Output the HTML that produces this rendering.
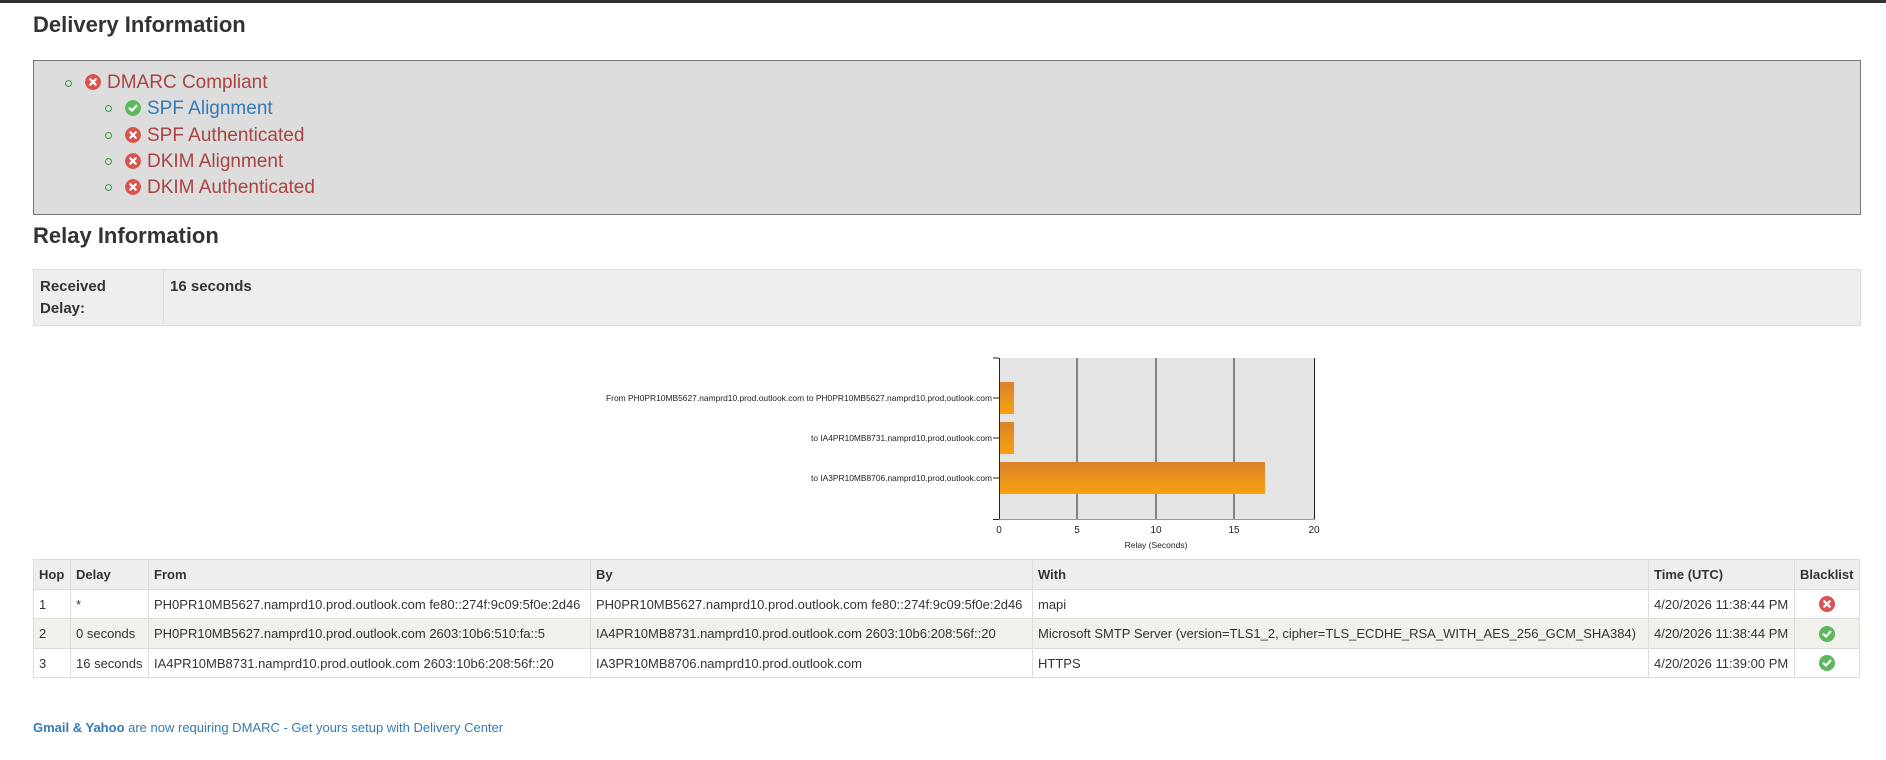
<!DOCTYPE html>
<html><head><meta charset="utf-8"><style>
*{margin:0;padding:0;box-sizing:border-box}
body{width:1886px;height:760px;background:#fff;font-family:"Liberation Sans",Arial,sans-serif;color:#333;position:relative;overflow:hidden}
.a{position:absolute}
h2{position:absolute;font-size:22px;font-weight:bold;color:#333;white-space:nowrap}
.ic{position:absolute;width:16px;height:16px;border-radius:50%}
.ic svg{display:block}
.bul{position:absolute;width:7px;height:7px;border:1.3px solid #3c9a3c;border-radius:50%}
.li{position:absolute;font-size:19px;white-space:nowrap;line-height:22px}
.red{color:#a94442}.blue{color:#337ab7}
table{position:absolute;border-collapse:collapse;font-size:13px}
td{border:1px solid #ddd;padding:0 5px;white-space:nowrap;vertical-align:middle}
</style></head><body>
<div class="a" style="left:0;top:0;width:1886px;height:3px;background:#333"></div>
<h2 style="left:33px;top:12px">Delivery Information</h2>
<div class="a" style="left:33px;top:60px;width:1828px;height:155px;background:#ddd;border:1px solid #777"></div>

<svg width="0" height="0" style="position:absolute"><defs>
<g id="x"><circle cx="8" cy="8" r="8" fill="#d9534f"/><path d="M5.3 5.3L10.7 10.7M10.7 5.3L5.3 10.7" stroke="#fff" stroke-width="2.2" stroke-linecap="round"/></g>
<g id="c"><circle cx="8" cy="8" r="8" fill="#5cb85c"/><path d="M4.6 8.3L7 10.6L11.4 5.8" stroke="#fff" stroke-width="2.2" fill="none" stroke-linecap="round" stroke-linejoin="round"/></g>
</defs></svg>

<div class="bul" style="left:65px;top:80px"></div>
<svg class="ic" style="left:85px;top:74px" width="16" height="16"><use href="#x"/></svg>
<div class="li red" style="left:107px;top:72px">DMARC Compliant</div>

<div class="bul" style="left:105px;top:105px"></div>
<svg class="ic" style="left:125px;top:100px" width="16" height="16"><use href="#c"/></svg>
<div class="li blue" style="left:147px;top:98px">SPF Alignment</div>

<div class="bul" style="left:105px;top:132px"></div>
<svg class="ic" style="left:125px;top:127px" width="16" height="16"><use href="#x"/></svg>
<div class="li red" style="left:147px;top:125px">SPF Authenticated</div>

<div class="bul" style="left:105px;top:158px"></div>
<svg class="ic" style="left:125px;top:153px" width="16" height="16"><use href="#x"/></svg>
<div class="li red" style="left:147px;top:151px">DKIM Alignment</div>

<div class="bul" style="left:105px;top:184px"></div>
<svg class="ic" style="left:125px;top:179px" width="16" height="16"><use href="#x"/></svg>
<div class="li red" style="left:147px;top:177px">DKIM Authenticated</div>

<h2 style="left:33px;top:223px">Relay Information</h2>
<div class="a" style="left:33px;top:269px;width:1828px;height:57px;background:#eee;border:1px solid #ddd"></div>
<div class="a" style="left:163px;top:269px;width:1px;height:57px;background:#ddd"></div>
<div class="a" style="left:40px;top:276px;font-size:15px;font-weight:bold;line-height:22px">Received<br>Delay:</div>
<div class="a" style="left:170px;top:276px;font-size:15px;font-weight:bold;line-height:22px">16 seconds</div>

<svg class="a" style="left:580px;top:350px" width="760" height="210">
<defs><linearGradient id="g" x1="0" y1="0" x2="0" y2="1"><stop offset="0" stop-color="#d9822b"/><stop offset="1" stop-color="#f7a10c"/></linearGradient></defs>
<rect x="419" y="8" width="316" height="161" fill="#e4e4e4"/>
<g stroke="#222" stroke-width="1">
<line x1="497" y1="8" x2="497" y2="169"/><line x1="576" y1="8" x2="576" y2="169"/><line x1="654" y1="8" x2="654" y2="169"/><line x1="734.5" y1="8" x2="734.5" y2="169"/>
<line x1="419.5" y1="8" x2="419.5" y2="170"/>
<line x1="413" y1="8" x2="419" y2="8"/><line x1="413" y1="169.5" x2="419" y2="169.5"/>
<line x1="413" y1="48" x2="419" y2="48"/><line x1="413" y1="88" x2="419" y2="88"/><line x1="413" y1="128" x2="419" y2="128"/>
</g>
<line x1="419" y1="169.5" x2="735" y2="169.5" stroke="#999"/>
<rect x="420" y="32" width="14" height="32" fill="url(#g)"/>
<rect x="420" y="72" width="14" height="32" fill="url(#g)"/>
<rect x="420" y="112" width="265" height="32" fill="url(#g)"/>
<g font-family="Liberation Sans,Arial,sans-serif" font-size="8.5" fill="#222" text-anchor="end">
<text x="412" y="51" textLength="386" lengthAdjust="spacingAndGlyphs">From PH0PR10MB5627.namprd10.prod.outlook.com to PH0PR10MB5627.namprd10.prod.outlook.com</text>
<text x="412" y="91" textLength="181" lengthAdjust="spacingAndGlyphs">to IA4PR10MB8731.namprd10.prod.outlook.com</text>
<text x="412" y="131" textLength="181" lengthAdjust="spacingAndGlyphs">to IA3PR10MB8706.namprd10.prod.outlook.com</text>
</g>
<g font-family="Liberation Sans,Arial,sans-serif" font-size="10" fill="#222" text-anchor="middle">
<text x="419" y="183">0</text><text x="497" y="183">5</text><text x="576" y="183">10</text><text x="654" y="183">15</text><text x="734" y="183">20</text>
<text x="576" y="198" font-size="8.5">Relay (Seconds)</text>
</g>
</svg>

<table style="left:33px;top:559px;width:1827px">
<tr style="background:#eee;font-weight:bold;height:30px"><td style="width:37px">Hop</td><td style="width:78px">Delay</td><td style="width:442px">From</td><td style="width:442px">By</td><td style="width:616px">With</td><td style="width:146px">Time (UTC)</td><td>Blacklist</td></tr>
<tr style="height:29px"><td>1</td><td>*</td><td>PH0PR10MB5627.namprd10.prod.outlook.com fe80::274f:9c09:5f0e:2d46</td><td>PH0PR10MB5627.namprd10.prod.outlook.com fe80::274f:9c09:5f0e:2d46</td><td>mapi</td><td>4/20/2026 11:38:44 PM</td><td style="text-align:center"><svg width="16" height="16" style="vertical-align:middle"><use href="#x"/></svg></td></tr>
<tr style="height:30px;background:#f1f0ea"><td>2</td><td>0 seconds</td><td>PH0PR10MB5627.namprd10.prod.outlook.com 2603:10b6:510:fa::5</td><td>IA4PR10MB8731.namprd10.prod.outlook.com 2603:10b6:208:56f::20</td><td>Microsoft SMTP Server (version=TLS1_2, cipher=TLS_ECDHE_RSA_WITH_AES_256_GCM_SHA384)</td><td>4/20/2026 11:38:44 PM</td><td style="text-align:center"><svg width="16" height="16" style="vertical-align:middle"><use href="#c"/></svg></td></tr>
<tr style="height:29px"><td>3</td><td>16 seconds</td><td>IA4PR10MB8731.namprd10.prod.outlook.com 2603:10b6:208:56f::20</td><td>IA3PR10MB8706.namprd10.prod.outlook.com</td><td>HTTPS</td><td>4/20/2026 11:39:00 PM</td><td style="text-align:center"><svg width="16" height="16" style="vertical-align:middle"><use href="#c"/></svg></td></tr>
</table>

<div class="a blue" style="left:33px;top:720px;font-size:13px"><b>Gmail &amp; Yahoo</b> are now requiring DMARC - Get yours setup with Delivery Center</div>
</body></html>
